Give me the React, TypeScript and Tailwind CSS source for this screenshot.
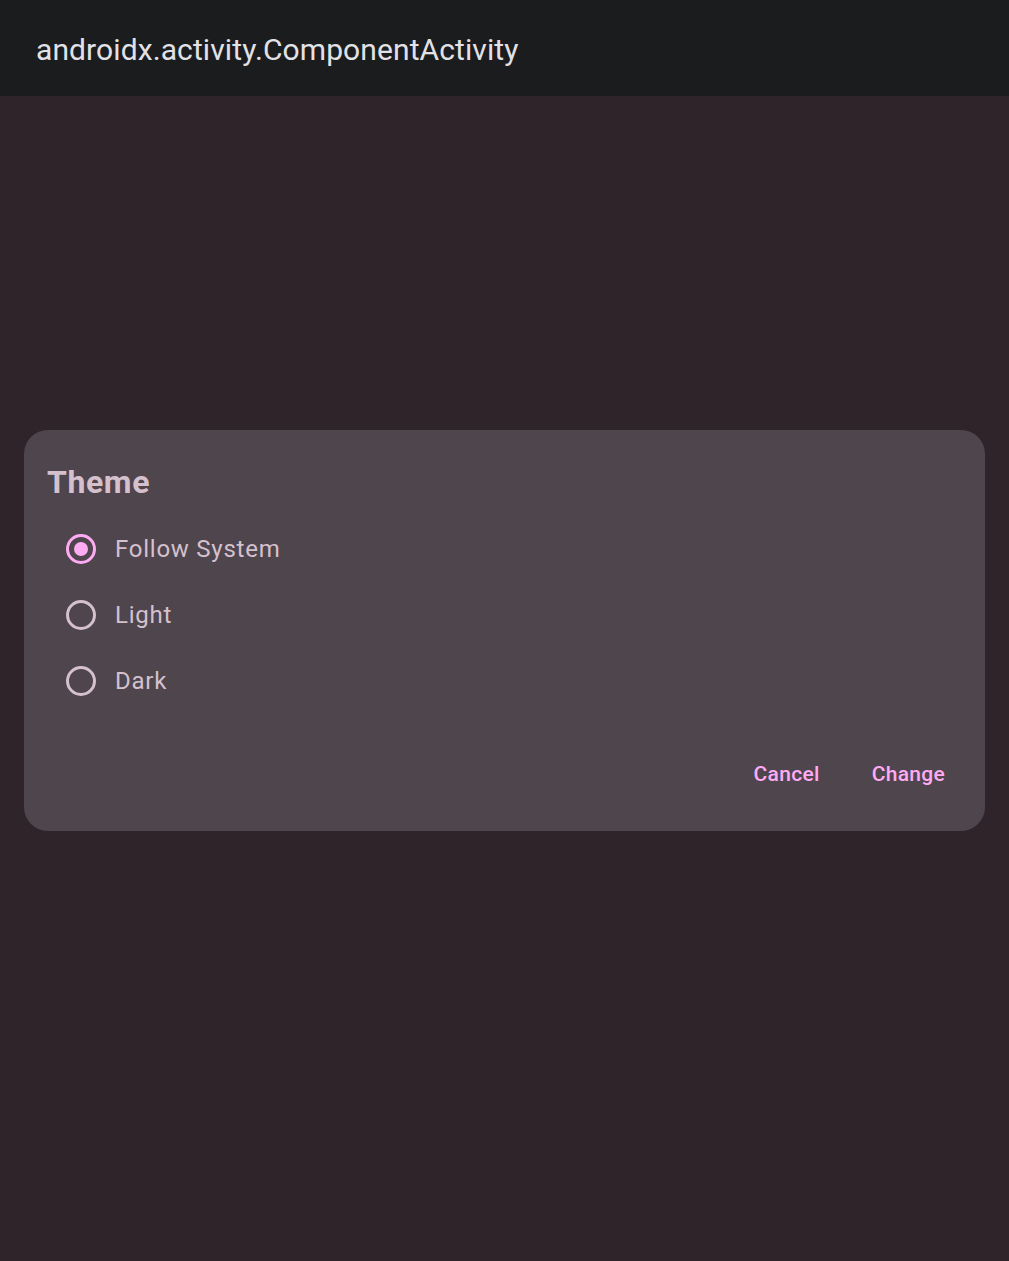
import React, { useState } from "react";

const options = ["Follow System", "Light", "Dark"];

const Radio = ({ checked }: { checked: boolean }) => (
  <span
    className={`flex h-[30px] w-[30px] items-center justify-center rounded-full border-[3px] ${
      checked ? "border-[#ffabf3]" : "border-[#d5c0cd]"
    }`}
  >
    {checked && <span className="h-[14px] w-[14px] rounded-full bg-[#ffabf3]" />}
  </span>
);

export default function App() {
  const [selected, setSelected] = useState("Follow System");

  return (
    <div
      className="flex min-h-[1261px] flex-col bg-[#2f242a]"
      style={{ fontFamily: "Roboto, 'Noto Sans', sans-serif" }}
    >
      {/* app bar */}
      <div className="flex h-[96px] items-center bg-[#1a1c1e] px-[36px] pt-[2px]">
        <h1 className="text-[30px] tracking-[0.1px] text-[#e2e2e6]">
          androidx.activity.ComponentActivity
        </h1>
      </div>

      <div className="px-[24px] pt-[334px]">
        {/* dialog */}
        <div className="flex h-[401px] flex-col rounded-[24px] bg-[#4f454d] px-[23px] pt-[30px]">
          <h2 className="text-[32px] font-bold leading-[44px] tracking-[0.6px] text-[#d5c0cd]">Theme</h2>
          <div className="mt-[12px] flex flex-col">
            {options.map((opt) => (
              <button
                key={opt}
                onClick={() => setSelected(opt)}
                className="flex h-[66px] items-center gap-[19px] pl-[19px] text-left"
              >
                <Radio checked={selected === opt} />
                <span className="text-[24px] tracking-[0.75px] text-[#d5c0cd]">{opt}</span>
              </button>
            ))}
          </div>
          <div className="mt-auto mb-[41px] flex justify-end gap-[52px] pr-[17px]">
            <button className="text-[21px] font-medium tracking-[0.3px] text-[#ffabf3]">Cancel</button>
            <button className="text-[21px] font-medium tracking-[0.3px] text-[#ffabf3]">Change</button>
          </div>
        </div>
      </div>
    </div>
  );
}
